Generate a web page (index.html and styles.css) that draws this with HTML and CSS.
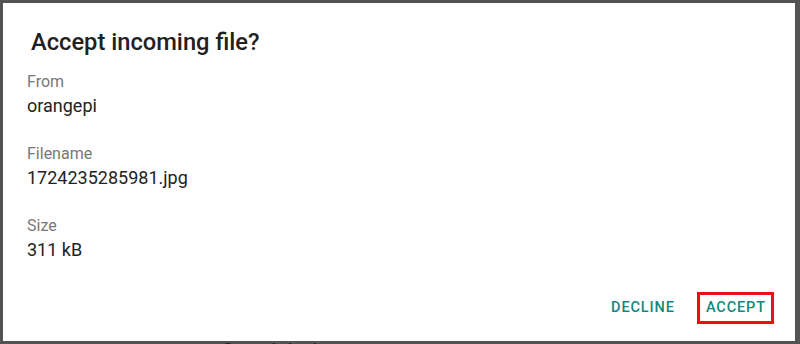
FILE: index.html
```html
<!DOCTYPE html>
<html lang="en">
<head>
<meta charset="utf-8">
<title>Accept incoming file?</title>
<link rel="stylesheet" href="styles.css">
</head>
<body>
<div class="app">
  <h2 class="app-heading">Saved devices</h2>
</div>
<div class="dialog" role="dialog" aria-labelledby="dlg-title">
  <h1 class="dialog-title" id="dlg-title">Accept incoming file?</h1>
  <div class="field">
    <div class="field-label">From</div>
    <div class="field-value">orangepi</div>
  </div>
  <div class="field">
    <div class="field-label">Filename</div>
    <div class="field-value">1724235285981.jpg</div>
  </div>
  <div class="field">
    <div class="field-label">Size</div>
    <div class="field-value">311 kB</div>
  </div>
  <div class="dialog-actions">
    <button class="btn">DECLINE</button>
    <button class="btn btn-focus">ACCEPT</button>
  </div>
</div>
</body>
</html>
```
FILE: styles.css
```css
html, body {
  margin: 0;
  padding: 0;
}
body {
  width: 800px;
  height: 344px;
  overflow: hidden;
  position: relative;
  background: #515453;
  font-family: Roboto, "Noto Sans", "Liberation Sans", sans-serif;
}
.app {
  padding: 339px 0 0 222px;
}
.app-heading {
  margin: 0;
  font-size: 20px;
  line-height: 24px;
  font-weight: 400;
  color: #1c2423;
}
.dialog {
  position: absolute;
  left: 3px;
  top: 3px;
  width: 792px;
  height: 338px;
  box-sizing: border-box;
  background: #ffffff;
  padding: 25px 21px 17px 24px;
  display: flex;
  flex-direction: column;
}
.dialog-title {
  margin: 0 0 16px 0;
  padding-left: 4px;
  font-size: 23.7px;
  line-height: 28px;
  font-weight: 500;
  color: #212121;
}
.field {
  margin-bottom: 26px;
}
.field-label {
  font-size: 16px;
  line-height: 20px;
  color: #777777;
}
.field-value {
  margin-top: 2px;
  font-size: 18px;
  line-height: 24px;
  color: #222222;
}
.dialog-actions {
  margin-top: auto;
  display: flex;
  justify-content: flex-end;
  gap: 14px;
}
.btn {
  font-family: Roboto, "Noto Sans", "Liberation Sans", sans-serif;
  font-size: 14.5px;
  font-weight: 500;
  letter-spacing: 0.9px;
  color: #12897a;
  background: transparent;
  border: 3px solid transparent;
  padding: 0 5px 0 6px;
  height: 32px;
  line-height: 26px;
  margin: 0;
  cursor: pointer;
}
.btn-focus {
  border-color: #f20d14;
}
```
